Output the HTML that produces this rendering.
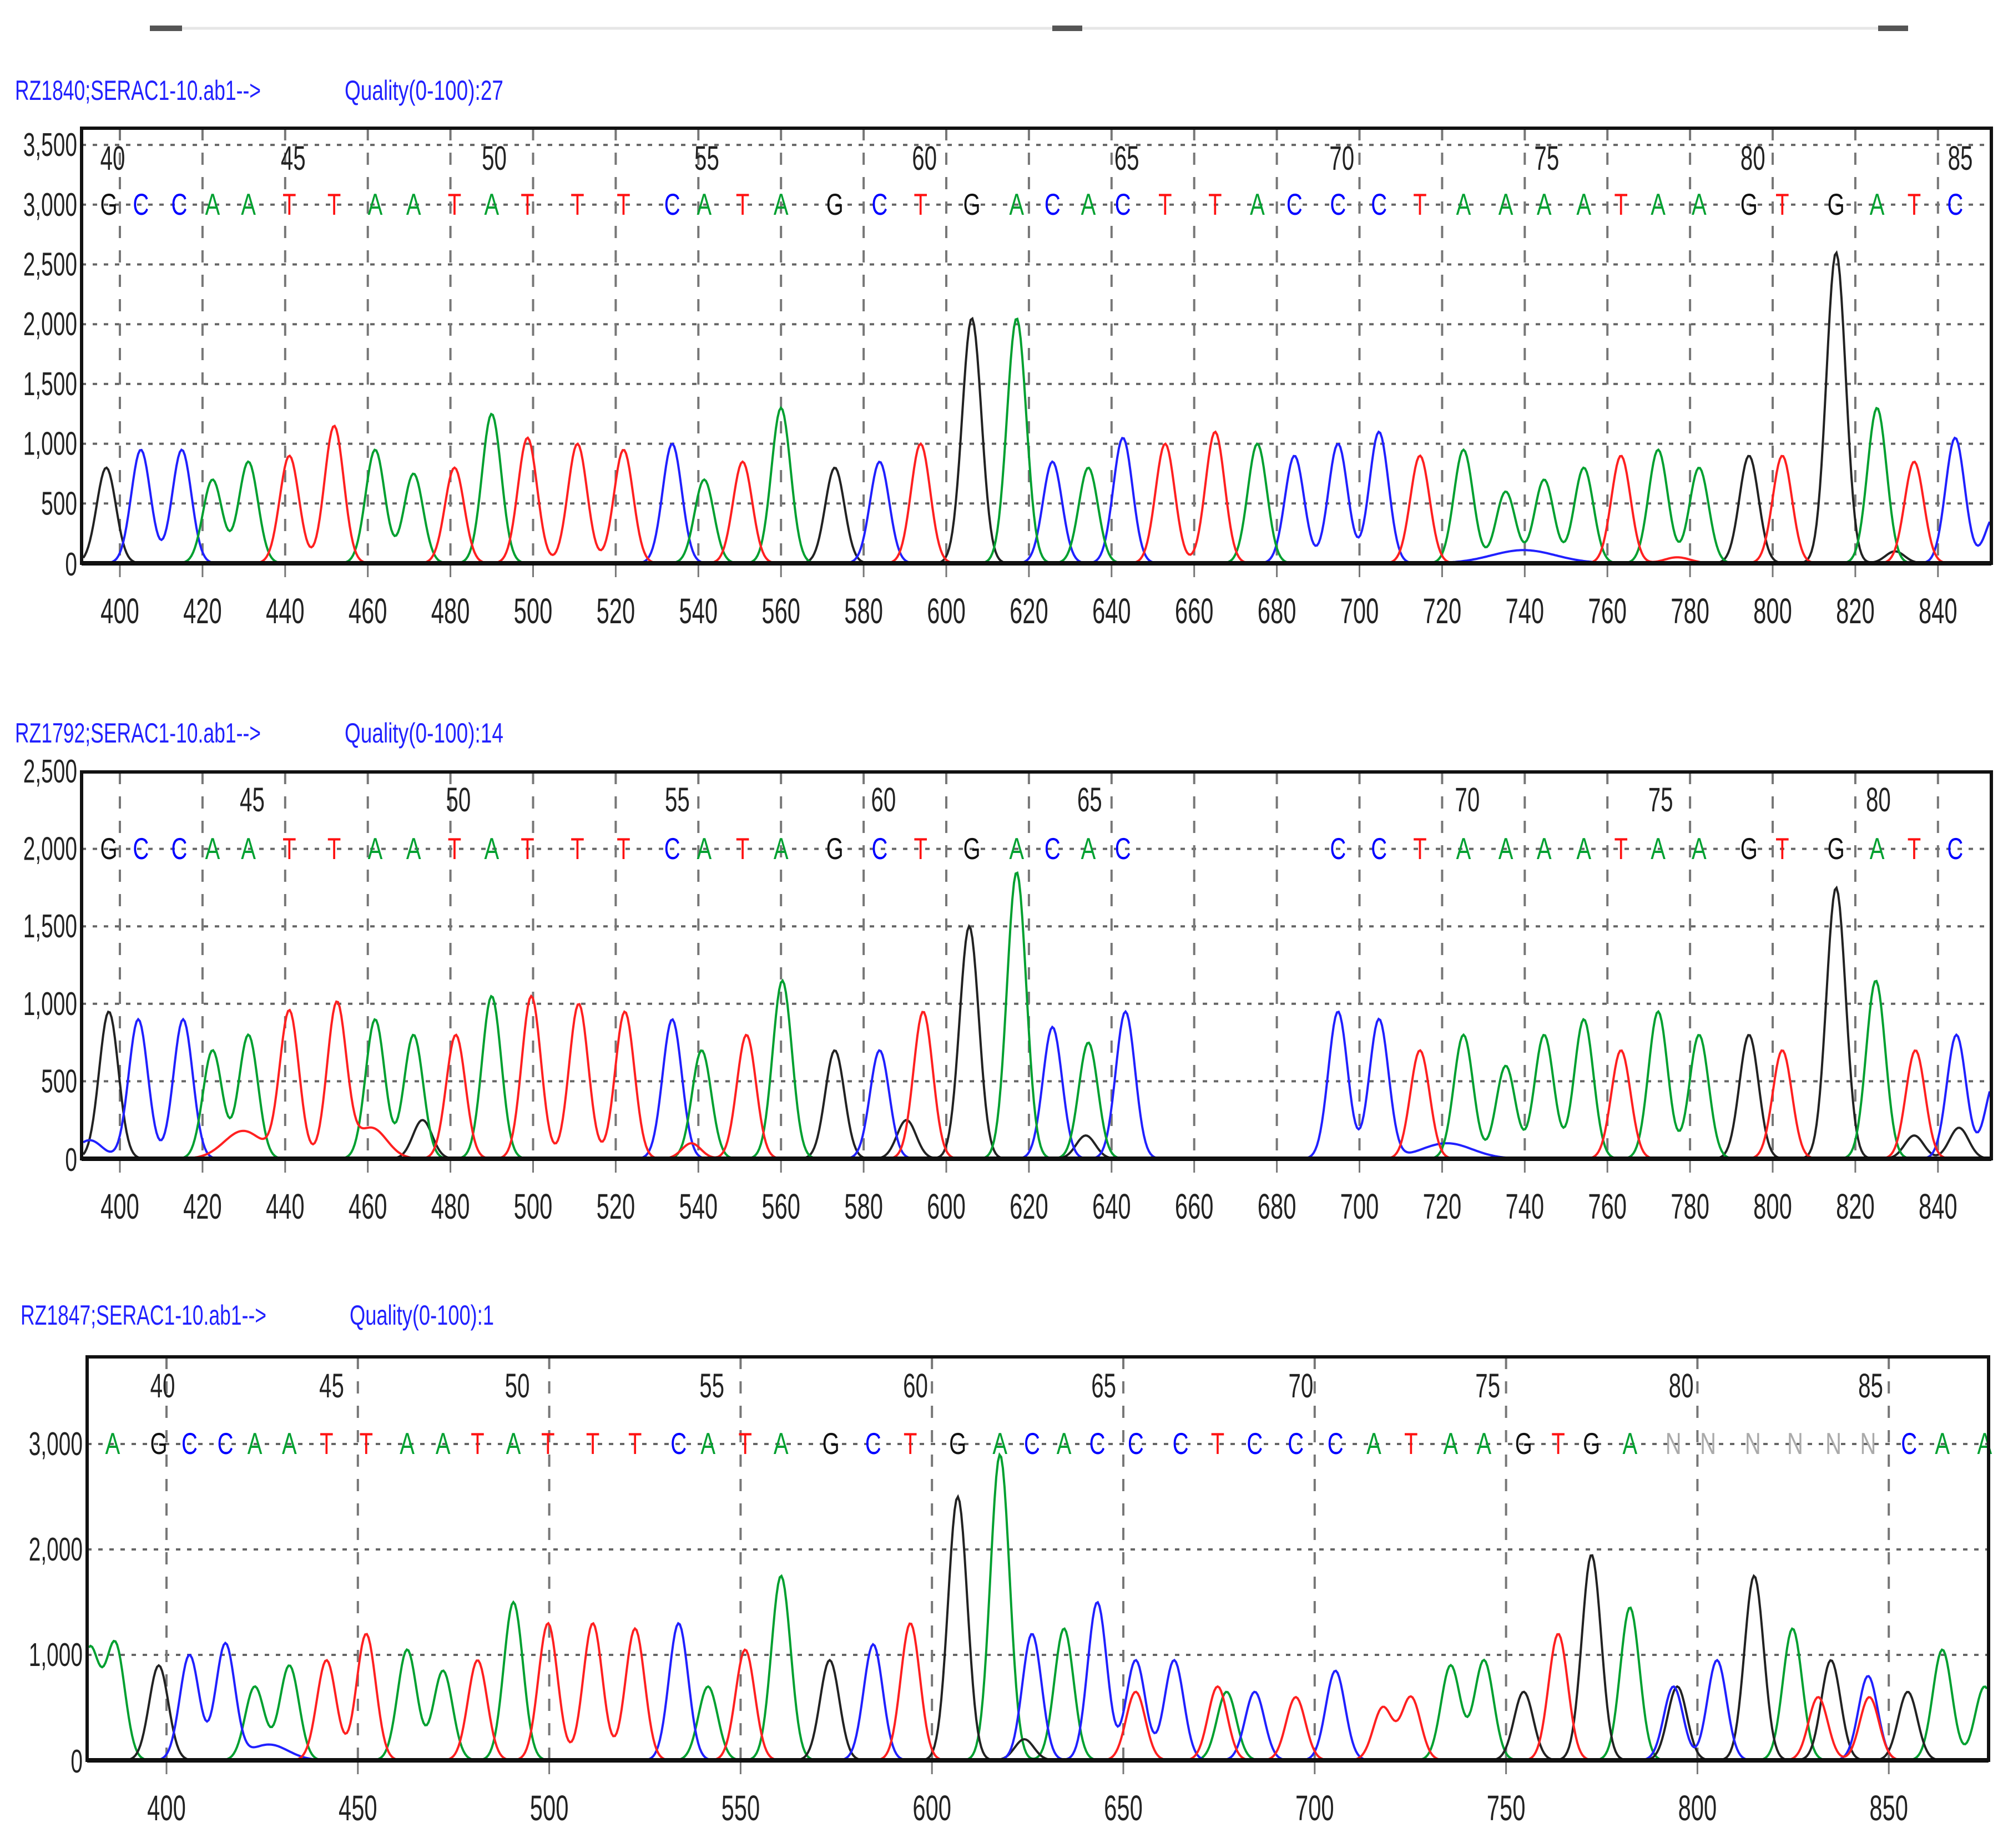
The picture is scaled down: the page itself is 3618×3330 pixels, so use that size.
<!DOCTYPE html>
<html><head><meta charset="utf-8"><style>
html,body{margin:0;padding:0;background:#fff;width:3618px;height:3330px;overflow:hidden}
svg{display:block}
text{font-family:"Liberation Sans Narrow","Liberation Sans",sans-serif}
</style></head><body>
<svg id="s" width="3618" height="3330" viewBox="0 0 3618 3330" xmlns="http://www.w3.org/2000/svg">
<line x1="270" y1="51" x2="3437" y2="51" stroke="#e6e6e6" stroke-width="5"/>
<rect x="270" y="46" width="58" height="10" fill="#555"/>
<rect x="1896" y="46" width="54" height="10" fill="#555"/>
<rect x="3384" y="46" width="54" height="10" fill="#555"/>
<text x="27" y="180" font-size="50" fill="#2020ff" textLength="443" lengthAdjust="spacingAndGlyphs">RZ1840;SERAC1-10.ab1--&gt;</text>
<text x="621" y="180" font-size="50" fill="#2020ff" textLength="286" lengthAdjust="spacingAndGlyphs">Quality(0-100):27</text>
<text x="27" y="1338" font-size="50" fill="#2020ff" textLength="443" lengthAdjust="spacingAndGlyphs">RZ1792;SERAC1-10.ab1--&gt;</text>
<text x="621" y="1338" font-size="50" fill="#2020ff" textLength="286" lengthAdjust="spacingAndGlyphs">Quality(0-100):14</text>
<text x="37" y="2387" font-size="50" fill="#2020ff" textLength="443" lengthAdjust="spacingAndGlyphs">RZ1847;SERAC1-10.ab1--&gt;</text>
<text x="630" y="2387" font-size="50" fill="#2020ff" textLength="260" lengthAdjust="spacingAndGlyphs">Quality(0-100):1</text>
<g id="g"></g>
</svg>
<script>
var S=2.307,NS="http://www.w3.org/2000/svg",G=document.getElementById('g');
function el(t,a,txt){var e=document.createElementNS(NS,t);for(var k in a)e.setAttribute(k,a[k]);if(txt!=null)e.textContent=txt;G.appendChild(e);return e;}
function tx(x,y,size,anchor,fill,s,sc){return el('text',{x:0,y:0,transform:'translate('+x+' '+y+') scale('+(sc||0.72)+' 1.1)','font-size':size,'text-anchor':anchor,fill:fill},s);}
var COL={A:'#00a030',C:'#0000ff',G:'#111',T:'#ff1010',N:'#aaa'};
function panel(p){
  p.hg.forEach(function(v){var y=p.base-v*p.ys;
    el('line',{x1:p.l,x2:p.r,y1:y,y2:y,stroke:'#666','stroke-width':4,'stroke-dasharray':'8 12'});
    tx(p.l-8,y+20,54,'end','#222',v.toLocaleString('en-US'));
  });
  tx(p.l-8,p.base+22,54,'end','#222','0');
  p.xt.forEach(function(v){var x=p.x0+(v-p.v0)*p.xs;
    el('line',{x1:x,x2:x,y1:p.t,y2:p.base,stroke:'#777','stroke-width':4,'stroke-dasharray':'22 22'});
    el('line',{x1:x,x2:x,y1:p.base,y2:p.base+25,stroke:'#777','stroke-width':3});
    tx(x,p.base+108,58,'middle','#222',v);
  });
  p.nums.forEach(function(n){tx(n[1]*S,p.ny,56,'middle','#222',n[0]);});
  p.bases.forEach(function(b){tx(b[1]*S,p.by+18,50,'middle',COL[b[0]],b[0],0.8);});
  var cols={k:'#222',b:'#2020ff',g:'#00a030',r:'#ff2020'};
  for(var c in p.pk){var pk=p.pk[c],d='';
    for(var x=p.l+3;x<=p.r-2;x+=3){var v=0,xp=x/S;
      pk.forEach(function(q){var sg=(q[2]||7.5);var dx=(xp-q[0])/sg;v+=q[1]*Math.exp(-dx*dx/2);});
      var y=p.base-v*p.ys; if(y<p.t)y=p.t; d+=(d?'L':'M')+x+' '+y.toFixed(1);}
    el('path',{d:d,fill:'none',stroke:cols[c],'stroke-width':4});
  }
  el('line',{x1:p.l,x2:p.r,y1:p.base,y2:p.base,stroke:'#000','stroke-width':8});
  el('rect',{x:p.l,y:p.t,width:p.r-p.l,height:p.base-p.t,fill:'none',stroke:'#111','stroke-width':6});
}
function bs(str,xs){return str.split('').map(function(c,i){return [c,xs[i]];});}
var b1x=[85,110,140,166,194,226,261,293,323,355,384,412,451,487,525,550,580,610,652,687,719,759,794,822,850,877,910,949,982,1011,1045,1077,1109,1143,1176,1206,1237,1266,1295,1327,1366,1392,1434,1466,1495,1527];
var b1='GCCAATTAATATTTCATAGCTGACACTTACCCTAAAATAAGTGATC';
var xt12=[];for(var v=400;v<=840;v+=20)xt12.push(v);
panel({l:147,r:3588,t:231,base:1015,ys:0.2154,x0:216,v0:400,xs:7.445,xt:xt12,hg:[500,1000,1500,2000,2500,3000,3500],
 ny:306,by:369,
 nums:[[40,88],[45,229],[50,386],[55,552],[60,722],[65,880],[70,1048],[75,1208],[80,1369],[85,1531]],
 bases:bs(b1,b1x),
 pk:{k:[[83,800],[652,800],[759,2050],[1366,900],[1434,2600],[1480,100]],
 b:[[110,950],[142,950],[525,1000],[687,850],[822,850],[877,1050],[1011,900],[1045,1000],[1077,1100],[1527,1050],[1558,400],[1190,110,25]],
 g:[[166,700],[194,850],[293,950],[323,750],[384,1250],[550,700],[610,1300],[794,2050],[850,800],[982,1000],[1143,950],[1176,600],[1206,700],[1237,800],[1295,950],[1327,800],[1466,1300]],
 r:[[226,900],[261,1150],[355,800],[412,1050],[451,1000],[487,950],[580,850],[719,1000],[910,1000],[949,1100],[1109,900],[1266,900],[1392,900],[1495,850],[1310,50,10]]}});
var b2='GCCAATTAATATTTCATAGCTGACAC'+'CCTAAAATAAGTGATC';
var b2x=b1x.slice(0,26).concat(b1x.slice(30));
panel({l:147,r:3588,t:1391,base:2088,ys:0.2792,x0:216,v0:400,xs:7.445,xt:xt12,hg:[500,1000,1500,2000,2500],
 ny:1462,by:1530,
 nums:[[45,197],[50,358],[55,529],[60,690],[65,851],[70,1146],[75,1297],[80,1467]],
 bases:bs(b2,b2x),
 pk:{k:[[85,950],[330,250],[652,700],[708,250],[757,1500],[848,150],[1366,800],[1434,1750],[1495,150],[1530,200]],
 b:[[70,120,10],[108,900],[143,900],[525,900],[687,700],[822,850],[879,950],[1045,950],[1077,900],[1528,800],[1558,500],[1130,100,20]],
 g:[[166,700],[194,800],[293,900],[323,800],[384,1050],[548,700],[611,1150],[794,1850],[850,750],[1143,800],[1176,600],[1206,800],[1237,900],[1295,950],[1327,800],[1465,1150]],
 r:[[226,950],[263,1000],[356,800],[415,1050],[452,1000],[488,950],[583,800],[721,950],[1109,700],[1266,700],[1392,700],[1496,700],[190,180,15],[290,200,12],[540,100]]}});
var b3='AGCCAATTAATATTTCATAGCTGACACCCTCCCATAAGTGANNNNNNCAA';
var b3x=[88,124,148,176,199,226,255,286,318,346,373,401,428,463,496,530,553,582,610,649,682,711,748,781,806,831,857,887,922,951,980,1012,1043,1073,1102,1133,1159,1190,1217,1243,1273,1307,1334,1369,1402,1432,1459,1491,1517,1550];
var xt3=[];for(var v=400;v<=850;v+=50)xt3.push(v);
panel({l:157,r:3583,t:2445,base:3172,ys:0.19,x0:300,v0:400,xs:6.896,xt:xt3,hg:[1000,2000,3000],
 ny:2518,by:2602,
 nums:[[40,127],[45,259],[50,404],[55,556],[60,715],[65,862],[70,1016],[75,1162],[80,1313],[85,1461]],
 bases:bs(b3,b3x),
 pk:{g:[[70,1050],[90,1100],[199,700],[226,900],[318,1050],[346,850],[401,1500],[553,700],[610,1750],[781,2900],[831,1250],[958,650],[1133,900],[1159,950],[1273,1450],[1400,1250],[1517,1050],[1550,700]],
 k:[[124,900],[648,950],[748,2500],[800,200],[1190,650],[1243,1950],[1310,700],[1370,1750],[1430,950],[1490,650]],
 b:[[148,1000],[176,1100],[210,150,15],[530,1300],[682,1100],[806,1200],[857,1500],[887,950],[917,950],[980,650],[1043,850],[1307,700],[1341,950],[1459,800]],
 r:[[255,950],[286,1200],[373,950],[428,1300],[463,1300],[496,1250],[582,1050],[711,1300],[887,650],[951,700],[1012,600],[1080,500],[1102,600],[1217,1200],[1420,600],[1460,600]]}});
</script>
</body></html>
